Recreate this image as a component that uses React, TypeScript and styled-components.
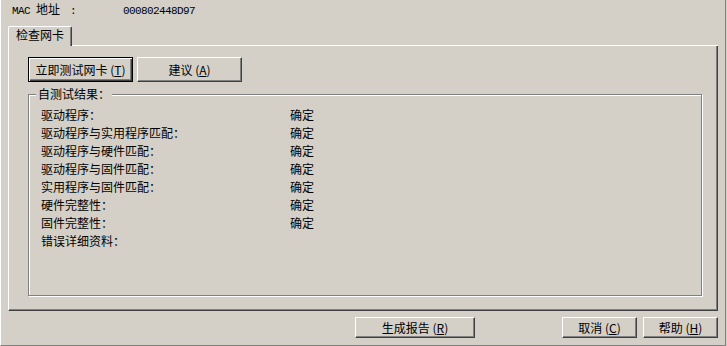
import React from "react";
import styled, { createGlobalStyle } from "styled-components";

const Global = createGlobalStyle`
  html, body { margin: 0; padding: 0; background: #d4d0c8; }
  body {
    font-family: "Noto Sans CJK SC", "Liberation Sans", sans-serif;
    font-size: 12px;
    color: #000;
  }
  * { box-sizing: border-box; }
`;

const Window = styled.div`
  width: 726px;
  height: 346px;
  background: #d4d0c8;
  border-left: 1px solid #fff;
  border-right: 1px solid #808080;
  border-bottom: 1px solid #808080;
  display: flex;
  flex-direction: column;
`;

const Header = styled.div`
  height: 26px;
  display: flex;
  align-items: baseline;
  padding: 3px 0 0 11px;
  line-height: 12px;
`;

const HeaderLabel = styled.span`
  width: 111px;
  display: flex;
  align-items: baseline;
  gap: 6px;
`;

const Mono = styled.span<{ $gap?: number }>`
  font-family: "Liberation Mono", "DejaVu Sans Mono", monospace;
  font-size: 11px;
  letter-spacing: -0.6px;
  margin-left: ${(p) => p.$gap ?? 0}px;
`;

const TabControl = styled.div`
  margin: 0 7px;
  height: 285px;
  display: flex;
  flex-direction: column;
`;

const TabStrip = styled.div`
  height: 20px;
  display: flex;
`;

const Tab = styled.div`
  width: 64px;
  height: 20px;
  border-top: 1px solid #fff;
  border-left: 1px solid #fff;
  border-right: 1px solid #404040;
  border-top-left-radius: 2px;
  border-top-right-radius: 2px;
  box-shadow: inset -1px 0 #808080;
  text-align: center;
  line-height: 16px;
  padding-top: 0;
`;

const TabFiller = styled.div`
  flex: 1;
  border-bottom: 1px solid #fff;
`;

const Panel = styled.div`
  flex: 1;
  border-left: 1px solid #fff;
  border-right: 1px solid #404040;
  border-bottom: 1px solid #404040;
  box-shadow: inset -1px -1px #808080;
  padding: 11px 15px 0 19px;
  display: flex;
  flex-direction: column;
`;

const ButtonRow = styled.div`
  display: flex;
  gap: 4px;
`;

const Button = styled.div<{ $w: number; $h: number; $default?: boolean }>`
  width: ${(p) => p.$w}px;
  height: ${(p) => p.$h}px;
  display: flex;
  align-items: center;
  justify-content: center;
  line-height: 12px;
  white-space: pre;
  ${(p) =>
    p.$default
      ? `border: 1px solid #000;
         box-shadow: inset 1px 1px #fff, inset -1px -1px #404040, inset -2px -2px #808080;`
      : `border: 1px solid;
         border-color: #fff #404040 #404040 #fff;
         box-shadow: inset -1px -1px #808080;`}
  u { text-decoration: underline; text-underline-offset: 1px; }
`;

const GroupBox = styled.div`
  position: relative;
  margin-top: 12px;
  height: 202px;
  border: 1px solid #808080;
  box-shadow: inset 1px 1px #fff, 1px 1px #fff;
  padding: 11px 0 0 12px;
`;

const Legend = styled.span`
  position: absolute;
  top: -8px;
  left: 7px;
  padding: 0 2px;
  background: #d4d0c8;
  line-height: 14px;
`;

const ResultGrid = styled.div`
  display: grid;
  grid-template-columns: 249px auto;
  grid-auto-rows: 18px;
  line-height: 18px;
`;

const Footer = styled.div`
  flex: 1;
  display: flex;
  padding: 6px 7px 0 354px;
  gap: 6px;
`;

const Spacer = styled.div`
  flex: 1;
`;

const rows: [string, string][] = [
  ["驱动程序：", "确定"],
  ["驱动程序与实用程序匹配：", "确定"],
  ["驱动程序与硬件匹配：", "确定"],
  ["驱动程序与固件匹配：", "确定"],
  ["实用程序与固件匹配：", "确定"],
  ["硬件完整性：", "确定"],
  ["固件完整性：", "确定"],
  ["错误详细资料：", ""],
];

export default function App() {
  return (
    <>
      <Global />
      <Window>
        <Header>
          <HeaderLabel>
            <Mono>MAC</Mono>
            <span>地址</span>
            <Mono $gap={4}>:</Mono>
          </HeaderLabel>
          <Mono>000802448D97</Mono>
        </Header>
        <TabControl>
          <TabStrip>
            <Tab>检查网卡</Tab>
            <TabFiller />
          </TabStrip>
          <Panel>
            <ButtonRow>
              <Button $w={105} $h={25} $default>
                立即测试网卡 (<u>T</u>)
              </Button>
              <Button $w={105} $h={25}>
                建议 (<u>A</u>)
              </Button>
            </ButtonRow>
            <GroupBox>
              <Legend>自测试结果：</Legend>
              <ResultGrid>
                {rows.map(([label, value]) => (
                  <React.Fragment key={label}>
                    <span>{label}</span>
                    <span>{value}</span>
                  </React.Fragment>
                ))}
              </ResultGrid>
            </GroupBox>
          </Panel>
        </TabControl>
        <Footer>
          <Button $w={120} $h={21}>
            生成报告 (<u>R</u>)
          </Button>
          <Spacer />
          <Button $w={75} $h={21}>
            取消 (<u>C</u>)
          </Button>
          <Button $w={75} $h={21}>
            帮助 (<u>H</u>)
          </Button>
        </Footer>
      </Window>
    </>
  );
}
